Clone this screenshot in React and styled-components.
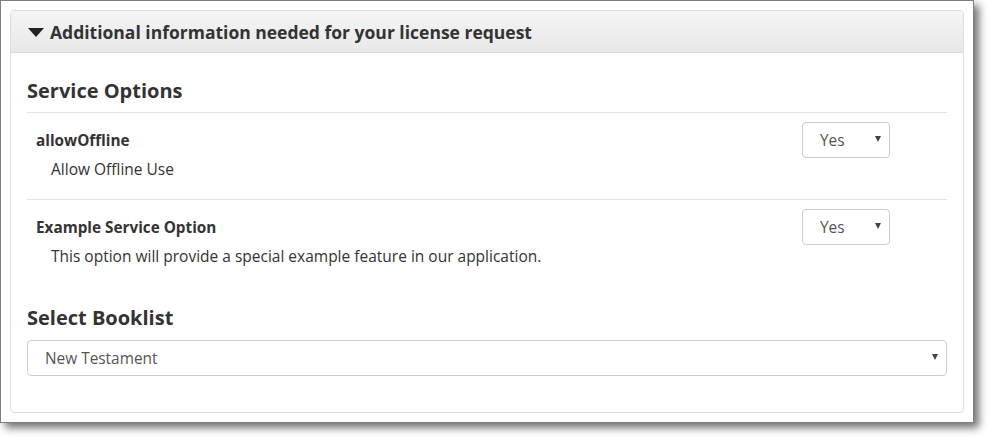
import React from 'react';
import styled, { createGlobalStyle } from 'styled-components';

const GlobalStyle = createGlobalStyle`
  body {
    margin: 0;
    background: #ffffff;
    font-family: "Open Sans", "Liberation Sans", sans-serif;
    color: #333333;
  }
`;

const Page = styled.div`
  width: 990px;
  height: 437px;
  box-sizing: border-box;
`;

const Frame = styled.div`
  width: 954px;
  height: 403px;
  padding: 9px;
  border: 1px solid #7f7f7f;
  background: #ffffff;
  box-shadow: 5px 5px 8px rgba(0, 0, 0, 0.55);
`;

const Panel = styled.div`
  height: 100%;
  box-sizing: border-box;
  border: 1px solid #dddddd;
  border-radius: 4px;
  display: flex;
  flex-direction: column;
  overflow: hidden;
`;

const PanelHeader = styled.div`
  height: 42px;
  box-sizing: border-box;
  display: flex;
  align-items: center;
  gap: 6px;
  padding: 0 17px;
  background: linear-gradient(to bottom, #f5f5f5, #e8e8e8);
  border-bottom: 1px solid #dddddd;
  font-size: 17.5px;
  font-weight: 700;
  color: #333333;
`;

const Caret = styled.span`
  width: 0;
  height: 0;
  border-left: 8px solid transparent;
  border-right: 8px solid transparent;
  border-top: 9px solid #222222;
  margin-top: 1px;
`;

const PanelBody = styled.div`
  padding: 19px 16px 0 16px;
  display: flex;
  flex-direction: column;
`;

const SectionTitle = styled.h3`
  margin: 0;
  font-size: 20px;
  font-weight: 700;
  line-height: 38px;
  color: #333333;
  border-bottom: ${(p) => (p.$ruled ? '1px solid #e2e2e2' : 'none')};
  padding-bottom: ${(p) => (p.$ruled ? '2px' : '0')};
`;

const OptionRow = styled.div`
  display: flex;
  justify-content: space-between;
  padding: 9px 57px 0 9px;
  height: 77px;
  border-bottom: ${(p) => (p.$last ? 'none' : '1px solid #e2e2e2')};
`;

const OptionText = styled.div`
  display: flex;
  flex-direction: column;
`;

const OptionName = styled.div`
  font-size: 15.3px;
  font-weight: 700;
  line-height: 18px;
  margin-top: 9px;
  color: #333333;
`;

const OptionDesc = styled.div`
  font-size: 15.5px;
  line-height: 20px;
  margin-top: 10px;
  padding-left: 15px;
  color: #333333;
`;

const SelectBox = styled.div`
  position: relative;
  box-sizing: border-box;
  width: ${(p) => p.$width || '88px'};
  height: 36px;
  border: 1px solid #cccccc;
  border-radius: 4px;
  background: #ffffff;
  display: flex;
  align-items: center;
  padding-left: 17px;
  font-size: 15.4px;
  color: #555555;
`;

const SelectArrow = styled.span`
  position: absolute;
  right: 8px;
  top: 13px;
  width: 0;
  height: 0;
  border-left: 3px solid transparent;
  border-right: 3px solid transparent;
  border-top: 6px solid #444444;
`;

const BooklistTitle = styled(SectionTitle)`
  margin-top: 19px;
  line-height: 26px;
  margin-bottom: 9px;
`;

const options = [
  { name: 'allowOffline', desc: 'Allow Offline Use', value: 'Yes' },
  {
    name: 'Example Service Option',
    desc: 'This option will provide a special example feature in our application.',
    value: 'Yes',
  },
];

const App = () => (
  <Page>
    <GlobalStyle />
    <Frame>
      <Panel>
        <PanelHeader>
          <Caret />
          Additional information needed for your license request
        </PanelHeader>
        <PanelBody>
          <SectionTitle $ruled>Service Options</SectionTitle>
          {options.map((opt, i) => (
            <OptionRow key={opt.name} $last={i === options.length - 1}>
              <OptionText>
                <OptionName>{opt.name}</OptionName>
                <OptionDesc>{opt.desc}</OptionDesc>
              </OptionText>
              <SelectBox>
                {opt.value}
                <SelectArrow />
              </SelectBox>
            </OptionRow>
          ))}
          <BooklistTitle>Select Booklist</BooklistTitle>
          <SelectBox $width="100%">
            New Testament
            <SelectArrow />
          </SelectBox>
        </PanelBody>
      </Panel>
    </Frame>
  </Page>
);

export default App;
